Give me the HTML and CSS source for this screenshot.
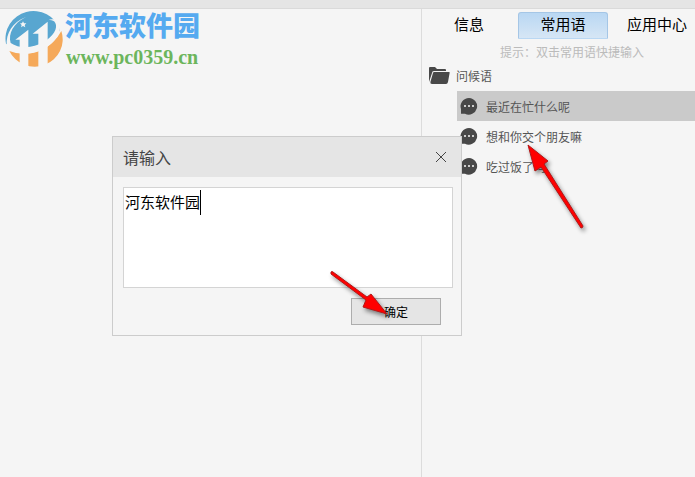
FILE: index.html
```
<!DOCTYPE html>
<html lang="zh-CN">
<head>
    <meta charset="UTF-8">
    <title>常用语</title>
    <link rel="stylesheet" href="styles.css">
</head>
<body>
    <div class="topbar"></div>

    <div class="main">
        <!-- 左侧聊天区 -->
        <div class="chat">
            <div class="brand">
                <svg class="brand-logo" viewBox="0 0 180 180" aria-hidden="true">
                    <!-- 上蓝下橙的圆 -->
                    <path d="M6 104A84 82 0 0 1 168 62Q150 104 100 122Q50 132 6 104Z" fill="#58a6d0"/>
                    <path d="M16 126Q60 144 110 124Q152 104 172 66A84 82 0 0 1 16 126Z" fill="#f5a95a"/>
                    <!-- 楼房 -->
                    <path d="M73 62V174H47V92H34ZM131 38V174H103V74H86Z" fill="#f5f5f5"/>
                    <!-- 环带 -->
                    <path d="M66 24C28 42 12 74 20 102C46 120 88 118 118 100C148 82 162 58 154 42C150 34 140 32 132 34C148 26 166 34 168 52C170 82 142 112 106 126C66 141 28 134 8 110C6 74 24 40 66 24Z" fill="#f5f5f5"/>
                    <path d="M57 37L60 43L67 43L62 48L64 55L57 51L51 55L53 48L48 43L54 43Z" fill="#f5f5f5"/>
                </svg>
                <div class="brand-text">
                    <div class="brand-name">河东软件园</div>
                    <div class="brand-url">www.pc0359.cn</div>
                </div>
            </div>
        </div>

        <!-- 右侧面板 -->
        <div class="side">
            <div class="tabs">
                <button class="tab" type="button">信息</button>
                <button class="tab active" type="button">常用语</button>
                <button class="tab" type="button">应用中心</button>
            </div>
            <p class="tip">提示：双击常用语快捷输入</p>
            <div class="group">
                <svg class="folder" viewBox="0 0 22 18" aria-hidden="true">
                    <path d="M1 16V2Q1 1 2 1H7L9 3H17Q18 3 18 4V5H6Q4 5 4 7Z" fill="#484848"/>
                    <path d="M6 6H21Q22 6 21.600 7L20 16Q19.500 18 18 18H4Q2 18 2.400 16L5 7Q5.300 6 6 6Z" fill="#484848"/>
                </svg>
                <span>问候语</span>
            </div>
            <ul class="phrases">
                <li class="phrase selected">
                    <svg class="bubble" viewBox="0 0 18 18" aria-hidden="true">
                        <path d="M9 1A8.500 8.300 0 1 1 5 16.800H1V12A8.500 8.300 0 0 1 9 1Z" fill="#484848"/>
                        <path d="M4 8h2v2H4zM8 8h2v2H8zM12 8h2v2h-2z" fill="#ccc"/>
                    </svg>
                    <span>最近在忙什么呢</span>
                </li>
                <li class="phrase">
                    <svg class="bubble" viewBox="0 0 18 18" aria-hidden="true">
                        <path d="M9 1A8.500 8.300 0 1 1 5 16.800H1V12A8.500 8.300 0 0 1 9 1Z" fill="#484848"/>
                        <path d="M4 8h2v2H4zM8 8h2v2H8zM12 8h2v2h-2z" fill="#ccc"/>
                    </svg>
                    <span>想和你交个朋友嘛</span>
                </li>
                <li class="phrase">
                    <svg class="bubble" viewBox="0 0 18 18" aria-hidden="true">
                        <path d="M9 1A8.500 8.300 0 1 1 5 16.800H1V12A8.500 8.300 0 0 1 9 1Z" fill="#484848"/>
                        <path d="M4 8h2v2H4zM8 8h2v2H8zM12 8h2v2h-2z" fill="#ccc"/>
                    </svg>
                    <span>吃过饭了吗</span>
                </li>
            </ul>
        </div>
    </div>

    <!-- 输入弹窗 -->
    <form class="dialog">
        <div class="dialog-head">
            <label for="phrase-input">请输入</label>
            <button class="close" type="button" aria-label="关闭">
                <svg viewBox="0 0 12 12" aria-hidden="true">
                    <path d="M1 1L11 11M11 1L1 11" stroke="#444" fill="none"/>
                </svg>
            </button>
        </div>
        <div class="dialog-body">
            <div class="field">
                <textarea id="phrase-input" class="input" spellcheck="false">河东软件园</textarea>
                <span class="caret"></span>
            </div>
            <button class="ok" type="button">确定</button>
        </div>
    </form>

    <!-- 红色箭头 -->
    <svg class="arrow arrow-phrase" viewBox="0 0 70 100" aria-hidden="true">
        <path d="M8 5L28 21L24 24L63 86Q63 88 61 88L21 27L15 31Z" fill="#f00" stroke="#b01818"/>
    </svg>
    <svg class="arrow arrow-ok" viewBox="0 0 70 60" aria-hidden="true">
        <path d="M6 6Q7 5 8 6L42 31L46 28L62 48L38 41L41 34L6 8Z" fill="#f00" stroke="#b01818"/>
    </svg>
</body>
</html>
```

FILE: styles.css
```
* {
    box-sizing: border-box;
}

body {
    display: flex;
    flex-direction: column;
    min-height: 100vh;
    margin: 0;
    background: #f5f5f5;
    color: #000;
    font-family: "Liberation Sans", "Noto Sans CJK SC", sans-serif;
    font-size: 12px;
    overflow: hidden;
}

button,
textarea {
    margin: 0;
    padding: 0;
    font-family: inherit;
    color: inherit;
}

.topbar {
    height: 9px;
    background: #e5e5e5;
    border-bottom: 1px solid #dadada;
}

.main {
    display: flex;
    flex: 1;
}

.chat {
    flex: 1;
}

/* 左上角标志 */
.brand {
    display: flex;
    gap: 1px;
    padding: 0 4px;
}

.brand-logo {
    width: 60px;
    height: 60px;
}

.brand-name {
    color: #55aaf0;
    font-size: 27px;
    font-weight: 900;
    line-height: 36px;
}

.brand-url {
    padding-left: 1px;
    color: #6cb55c;
    font-family: "Liberation Serif", serif;
    font-size: 20px;
    font-weight: bold;
    line-height: 24px;
}

/* 右侧面板 */
.side {
    flex: 0 0 274px;
    border-left: 1px solid #dcdcdc;
    overflow: hidden;
}

.tabs {
    display: flex;
    gap: 4px;
    padding: 3px 2px 0;
}

.tab {
    flex: none;
    width: 90px;
    height: 27px;
    padding-bottom: 4px;
    border: 1px solid transparent;
    background: none;
    font-size: 15px;
}

.tab.active {
    border-color: #a5c6e6;
    border-bottom-color: transparent;
    border-radius: 3px 3px 0 0;
    background: linear-gradient(#b9d7f3, #d6e6f5);
}

.tip {
    margin: 0;
    padding: 4px 0 0 78px;
    color: #bbb;
    font-family: "Liberation Sans", "Noto Sans CJK TC", sans-serif;
    line-height: 20px;
    white-space: nowrap;
}

.group {
    display: flex;
    align-items: center;
    gap: 6px;
    height: 28px;
    padding: 0 0 4px 6px;
    color: #555;
}

.folder {
    width: 22px;
    height: 18px;
}

.phrases {
    margin: 0;
    padding: 0 0 0 35px;
    list-style: none;
}

.phrase {
    display: flex;
    align-items: center;
    gap: 8px;
    height: 30px;
    padding-left: 3px;
    color: #555;
}

.phrase.selected {
    background: #cacaca;
}

.bubble {
    width: 18px;
    height: 18px;
}

/* 弹窗 */
.dialog {
    position: absolute;
    left: 112px;
    top: 136px;
    width: 350px;
    border: 1px solid #ccc;
    background: #f5f5f5;
}

.dialog-head {
    display: flex;
    align-items: center;
    justify-content: space-between;
    height: 40px;
    padding: 0 14px 0 10px;
    background: #e5e5e5;
    color: #444;
    font-size: 16px;
}

.close {
    display: flex;
    border: none;
    background: none;
}

.close svg {
    width: 12px;
    height: 12px;
}

.dialog-body {
    display: flex;
    flex-direction: column;
    padding: 10px 8px 10px 10px;
}

.field {
    position: relative;
    display: flex;
}

.input {
    flex: 1;
    height: 101px;
    padding: 4px 1px;
    border: 1px solid #d4d4d4;
    outline: none;
    background: #fff;
    font-size: 15px;
    line-height: 22px;
    resize: none;
}

.caret {
    position: absolute;
    left: 77px;
    top: 3px;
    width: 1px;
    height: 25px;
    background: #000;
}

.ok {
    align-self: flex-end;
    width: 90px;
    height: 27px;
    margin: 10px 12px 0 0;
    border: 1px solid #adadad;
    background: #e5e5e5;
    font-size: 12px;
}

/* 箭头 */
.arrow {
    position: absolute;
    filter: drop-shadow(2px 3px 2px rgba(0, 0, 0, 0.45));
    pointer-events: none;
}

.arrow-phrase {
    left: 520px;
    top: 140px;
    width: 70px;
    height: 100px;
}

.arrow-ok {
    left: 325px;
    top: 266px;
    width: 70px;
    height: 60px;
}
```
